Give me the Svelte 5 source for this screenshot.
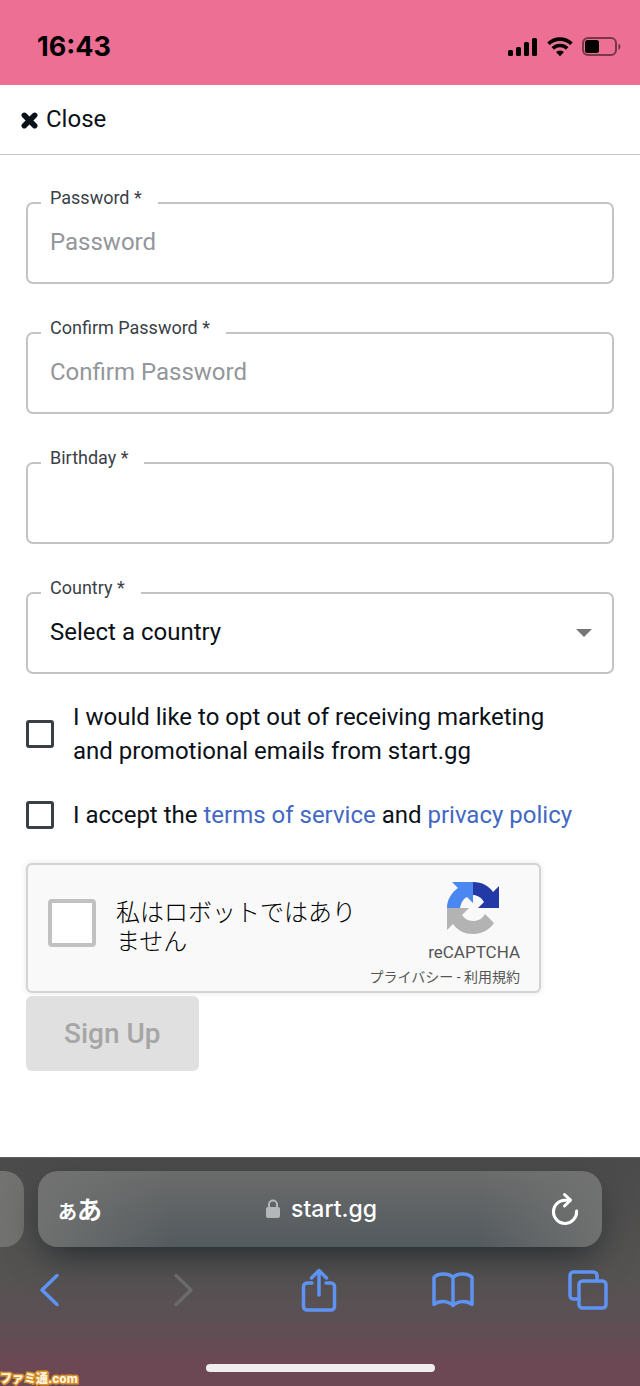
<script lang="ts">
  interface Field {
    id: string;
    label: string;
    type: string;
    placeholder: string;
  }

  const fields: Field[] = [
    { id: 'password', label: 'Password', type: 'password', placeholder: 'Password' },
    { id: 'confirm', label: 'Confirm Password', type: 'password', placeholder: 'Confirm Password' },
    { id: 'birthday', label: 'Birthday', type: 'text', placeholder: '' }
  ];

  const countries = ['Japan', 'United States', 'Canada', 'France'];

  let values: Record<string, string> = $state({ password: '', confirm: '', birthday: '' });
  let country = $state('');
  let optOut = $state(false);
  let accepted = $state(false);
  let human = $state(false);

  let ready = $derived(accepted && human && country !== '' && values.password !== '' && values.password === values.confirm);
</script>

<div class="screen">
  <header class="status">
    <span class="time">16:43</span>
    <div class="indicators" aria-hidden="true">
      <svg width="30" height="20" viewBox="0 0 30 20">
        <rect x="0" y="13" width="5" height="6" rx="1.5" />
        <rect x="8" y="10" width="5" height="9" rx="1.5" />
        <rect x="16" y="5" width="5" height="14" rx="1.5" />
        <rect x="24" y="1" width="5" height="18" rx="1.5" />
      </svg>
      <svg width="26" height="20" viewBox="0 0 26 20">
        <g fill="none" stroke="#000" stroke-width="3.6">
          <path d="M1.5 6.8a16.5 16.5 0 0 1 23 0" />
          <path d="M5.8 11.4a10.4 10.4 0 0 1 14.4 0" />
        </g>
        <path d="M13 19.2l-4-4.1a5.8 5.8 0 0 1 8 0z" />
      </svg>
      <svg width="39" height="20" viewBox="0 0 39 20">
        <rect x="1" y="1" width="33" height="17" rx="5" fill="none" stroke="#000" stroke-opacity="0.5" stroke-width="2" />
        <rect x="3" y="3" width="14" height="13" rx="2.5" />
        <path d="M36.5 6.5a3.6 3.6 0 0 1 0 6.4z" fill-opacity="0.55" />
      </svg>
    </div>
  </header>

  <nav class="topbar">
    <button type="button" class="close">
      <svg width="17" height="17" viewBox="0 0 17 17" aria-hidden="true">
        <path d="M3.3 3.3l10.4 10.4M13.7 3.3L3.3 13.7" stroke="currentColor" stroke-width="5.5" stroke-linecap="round" />
      </svg>
      Close
    </button>
  </nav>

  <main>
    <form onsubmit={(e) => e.preventDefault()}>
      <div class="fields">
        {#each fields as field (field.id)}
          <div class="field">
            <label for={field.id}>{field.label} *</label>
            <input id={field.id} type={field.type} placeholder={field.placeholder} bind:value={values[field.id]} />
          </div>
        {/each}
        <div class="field">
          <label for="country">Country *</label>
          <select id="country" bind:value={country}>
            <option value="">Select a country</option>
            {#each countries as name}
              <option value={name}>{name}</option>
            {/each}
          </select>
          <svg class="arrow" width="16" height="8" viewBox="0 0 16 8" aria-hidden="true">
            <path d="M0 0h16L8 8z" fill="#757575" />
          </svg>
        </div>
      </div>

      <div class="checks">
        <div class="check">
          <input id="optout" type="checkbox" bind:checked={optOut} />
          <label for="optout">I would like to opt out of receiving marketing and promotional emails from start.gg</label>
        </div>
        <div class="check">
          <input id="accept" type="checkbox" bind:checked={accepted} />
          <label for="accept">I accept the <a href="#terms">terms of service</a> and <a href="#privacy">privacy policy</a></label>
        </div>
      </div>

      <div class="captcha">
        <input id="robot" type="checkbox" bind:checked={human} />
        <label for="robot">私はロボットではありません</label>
        <div class="brand">
          <svg width="52" height="52" viewBox="0 0 52 52" aria-hidden="true">
            <path d="M26 0C35 0 42 4 46 10L52 4V26H31L37 20C34 15 30 13 26 13z" fill="#2339a5" />
            <path d="M26 0H5L11 6C4 11 0 18 0 26H13C14 21 16 17 20 15L26 21z" fill="#4a87f0" />
            <path d="M0 26V48L6 42C11 49 18 52 26 52C35 52 42 48 47 41L38 32C35 37 31 39 26 39C21 39 17 36 15 33L22 26z" fill="#b3b3b3" />
          </svg>
          <span class="brand-name">reCAPTCHA</span>
          <span class="legal"><a href="#captcha-privacy">プライバシー</a> - <a href="#captcha-terms">利用規約</a></span>
        </div>
      </div>

      <button type="submit" class="submit" disabled={!ready}>Sign Up</button>
    </form>
  </main>

  <footer class="browser">
    <div class="tabs">
      <div class="previous-tab"></div>
      <div class="address">
        <button type="button" class="reader" aria-label="Page settings"><small>あ</small>あ</button>
        <span class="host">
          <svg width="14" height="20" viewBox="0 0 14 20" aria-hidden="true">
            <path d="M3 9V5.5a4 4 0 0 1 8 0V9" fill="none" stroke="#b4b6b9" stroke-width="2" />
            <rect x="0" y="8" width="14" height="11" rx="2" fill="#b4b6b9" />
          </svg>
          start.gg
        </span>
        <button type="button" class="reload" aria-label="Reload">
          <svg width="28" height="34" viewBox="0 0 28 34" fill="none" stroke="#fff" stroke-width="3" stroke-linecap="round" stroke-linejoin="round">
            <path d="M18.5 8.2H14A11.6 11.6 0 1 0 25.6 19" />
            <path d="M13.5 2.5l6 5.7-6 5.8" />
          </svg>
        </button>
      </div>
    </div>

    <div class="toolbar">
      <button type="button" aria-label="Back">
        <svg width="22" height="34" viewBox="0 0 22 34"><path d="M19 2.5L4 17l15 14.5" /></svg>
      </button>
      <button type="button" aria-label="Forward" disabled>
        <svg width="22" height="34" viewBox="0 0 22 34"><path d="M3 2.5L18 17 3 31.5" /></svg>
      </button>
      <button type="button" aria-label="Share">
        <svg width="36" height="44" viewBox="0 0 36 44">
          <path d="M11 15H6a3.5 3.5 0 0 0-3.5 3.5v20A3.5 3.5 0 0 0 6 42h24a3.5 3.5 0 0 0 3.5-3.5v-20A3.5 3.5 0 0 0 30 15h-5" />
          <path d="M18 27V3M10.5 10L18 2.5l7.5 7.5" />
        </svg>
      </button>
      <button type="button" aria-label="Bookmarks">
        <svg width="42" height="36" viewBox="0 0 42 36">
          <path d="M21 5.5C17 .8 6 .8 2 5.5v27C7 28.500 16 28.500 21 33.500C26 28.500 35 28.500 40 32.500v-27C36 .8 25 .8 21 5.500zM21 5.500V33" />
        </svg>
      </button>
      <button type="button" aria-label="Tabs">
        <svg width="40" height="40" viewBox="0 0 40 40">
          <rect x="11" y="11" width="27" height="27" rx="3.5" />
          <path d="M11 29H5.5A3.5 3.5 0 0 1 2 25.5v-20A3.5 3.5 0 0 1 5.500 2h20A3.5 3.5 0 0 1 29 5.500V11" />
        </svg>
      </button>
    </div>

    <div class="home"></div>
    <span class="credit">ファミ通.com</span>
  </footer>
</div>

<style>
  :global(body) {
    margin: 0;
    background: #fff;
  }

  .screen {
    display: flex;
    flex-direction: column;
    min-height: 100vh;
    font-family: Roboto, 'Noto Sans CJK JP', sans-serif;
    font-size: 24px;
    color: #0b1118;
  }

  .screen * {
    box-sizing: border-box;
  }

  button,
  input,
  select {
    font: inherit;
    color: inherit;
    margin: 0;
  }

  button {
    display: flex;
    align-items: center;
    justify-content: center;
    padding: 0;
    border: 0;
    background: none;
  }

  a {
    color: #4368c4;
    text-decoration: none;
  }

  .status {
    display: flex;
    align-items: center;
    justify-content: space-between;
    height: 85px;
    padding: 8px 19px 0 37px;
    background: #ed6f94;
    color: #000;
  }

  .time {
    font-family: Inter, sans-serif;
    font-size: 27px;
    font-weight: 700;
  }

  .indicators {
    display: flex;
    align-items: center;
    gap: 9px;
  }

  .topbar {
    display: flex;
    align-items: center;
    height: 70px;
    padding: 0 21px 2px;
    border-bottom: 1px solid #c8c8c8;
  }

  .close {
    gap: 8px;
    line-height: 32px;
  }

  .close svg {
    margin-top: 4px;
  }

  main {
    flex: 1;
    padding: 47px 26px 86px;
  }

  .fields {
    display: flex;
    flex-direction: column;
    gap: 48px;
  }

  .field {
    position: relative;
  }

  .field label {
    position: absolute;
    top: -16px;
    left: 15px;
    padding: 0 16px 0 9px;
    background: #fff;
    font-size: 18px;
    line-height: 24px;
    color: #3a3f47;
  }

  .field input,
  .field select {
    display: block;
    width: 100%;
    height: 82px;
    padding: 0 22px 2px;
    border: 2px solid #c4c4c4;
    border-radius: 7px;
    background: #fff;
    appearance: none;
    outline: none;
  }

  .field select {
    padding-right: 60px;
  }

  .field input::placeholder {
    color: #93969a;
    opacity: 1;
  }

  .arrow {
    position: absolute;
    top: 37px;
    right: 22px;
    pointer-events: none;
  }

  .checks {
    display: flex;
    flex-direction: column;
    gap: 30px;
    padding: 26px 0 31px;
  }

  .check {
    display: flex;
    align-items: center;
    gap: 19px;
    line-height: 34px;
  }

  .check input {
    flex: none;
    width: 28px;
    height: 28px;
    border: 3px solid #3c3e46;
    border-radius: 3px;
    appearance: none;
  }

  .check input:checked {
    background: #4368c4;
  }

  .check label {
    max-width: 512px;
  }

  .captcha {
    display: flex;
    align-items: center;
    width: 515px;
    max-width: 100%;
    height: 130px;
    margin-bottom: 3px;
    padding: 0 19px 0 20px;
    border: 2px solid #d3d3d3;
    border-radius: 6px;
    background: #f9f9f9;
    box-shadow: 0 0 5px 1px rgba(0, 0, 0, 0.08);
    color: #000;
  }

  .captcha input {
    flex: none;
    width: 48px;
    height: 48px;
    margin: 0 20px 10px 0;
    border: 4px solid #c1c1c1;
    border-radius: 4px;
    background: #fff;
    appearance: none;
  }

  .captcha input:checked {
    background: #4a87f0;
  }

  .captcha label {
    flex: none;
    width: 242px;
    font-weight: 300;
    line-height: 29px;
  }

  .brand {
    display: flex;
    flex-direction: column;
    align-items: flex-end;
    flex: 1;
    padding-top: 14px;
    color: #555;
    white-space: nowrap;
  }

  .brand svg {
    margin: 0 21px 5px;
  }

  .brand-name {
    font-size: 17px;
    line-height: 26px;
  }

  .legal {
    font-size: 14px;
    line-height: 24px;
  }

  .legal a {
    color: inherit;
  }

  .submit {
    height: 75px;
    padding: 0 38px;
    border-radius: 6px;
    background: #4368c4;
    color: #fff;
    font-size: 28px;
    font-weight: 500;
  }

  .submit:disabled {
    background: #e0e0e0;
    color: #a6a6a6;
  }

  .browser {
    position: relative;
    display: flex;
    flex-direction: column;
    align-items: center;
    height: 229px;
    overflow: hidden;
    padding: 13px 0 14px;
    background: linear-gradient(#4b4b4b, #555352 50%, #5b5054 70%, #6c4854 90%, #6c4854);
    border-top: 1px solid #606060;
  }

  .tabs {
    display: flex;
    gap: 14px;
    align-self: stretch;
    height: 76px;
    padding-right: 38px;
  }

  .previous-tab {
    flex: none;
    width: 24px;
    border-radius: 0 20px 20px 0;
    background: #727371;
  }

  .address {
    display: flex;
    align-items: center;
    justify-content: space-between;
    flex: 1;
    padding: 0 23px 0 20px;
    border-radius: 20px;
    background:
      linear-gradient(90deg, rgba(114, 115, 114, 0.9), rgba(114, 115, 114, 0) 24%, rgba(114, 115, 114, 0) 78%, rgba(114, 115, 114, 0.9)),
      linear-gradient(#6a6b6b, #535a5e);
    box-shadow: 0 14px 36px -6px #252b2f;
    color: #fff;
  }

  .reader {
    align-items: baseline;
    font-family: 'Noto Sans CJK JP', sans-serif;
    font-size: 25px;
    font-weight: 700;
    line-height: 32px;
  }

  .reader small {
    font-size: 19px;
  }

  .host {
    display: flex;
    align-items: center;
    gap: 11px;
    padding-right: 10px;
    font-family: Inter, sans-serif;
    font-size: 23px;
    font-weight: 500;
  }

  .toolbar {
    display: flex;
    justify-content: space-between;
    align-self: stretch;
    padding: 20px 30px 0 27px;
  }

  .toolbar button {
    width: 44px;
    height: 46px;
  }

  .toolbar svg {
    fill: none;
    stroke: #5e93f4;
    stroke-width: 3.5;
    stroke-linecap: round;
    stroke-linejoin: round;
  }

  .toolbar button:disabled svg {
    stroke: #6b6a6b;
  }

  .home {
    width: 229px;
    height: 8px;
    margin-top: auto;
    border-radius: 4px;
    background: #efedee;
  }

  .credit {
    position: absolute;
    bottom: 0;
    left: 0;
    font-family: Inter, 'Noto Sans CJK JP', sans-serif;
    font-size: 12px;
    font-weight: 800;
    line-height: 15px;
    color: #fff3dc;
    -webkit-text-stroke: 3px #d9922b;
    paint-order: stroke fill;
  }
</style>
